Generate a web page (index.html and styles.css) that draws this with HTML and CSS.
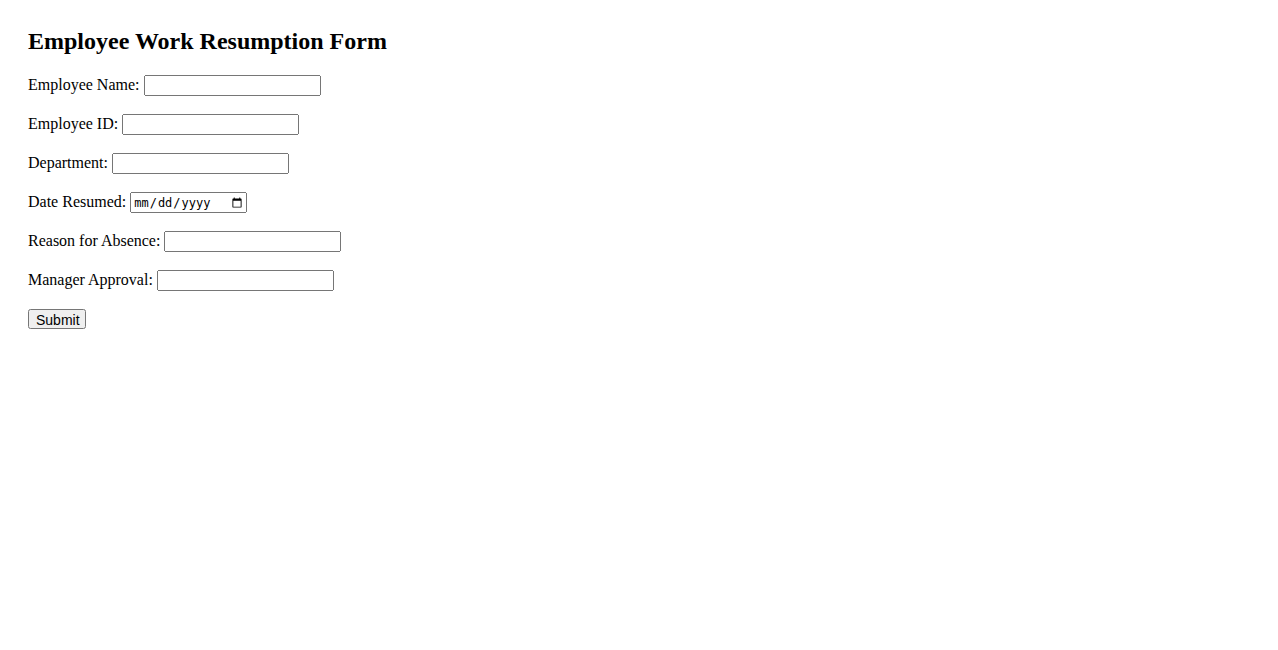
FILE: index.html
```html
<!DOCTYPE html>
<html>
<head>
<meta charset="utf-8">
<title>Employee Work Resumption Form</title>
<link rel="stylesheet" href="styles.css">
</head>
<body class="page">
<h2 class="title">Employee Work Resumption Form</h2>
<form class="form">
<p class="row"><label for="name">Employee Name:</label> <input class="field" type="text" id="name"></p>
<p class="row"><label for="eid">Employee ID:</label> <input class="field" type="text" id="eid"></p>
<p class="row"><label for="dept">Department:</label> <input class="field" type="text" id="dept"></p>
<p class="row"><label for="date">Date Resumed:</label> <input class="date" type="date" id="date"></p>
<p class="row"><label for="reason">Reason for Absence:</label> <input class="field" type="text" id="reason"></p>
<p class="row"><label for="mgr">Manager Approval:</label> <input class="field" type="text" id="mgr"></p>
<p class="row"><input class="submit" type="submit" value="Submit"></p>
</form>
</body>
</html>
```
FILE: styles.css
```css
.page {
  margin: 8px;
  padding: 20px;
  font-family: "Liberation Serif", "Times New Roman", serif;
  font-size: 16px;
  color: #000;
  background: #fff;
}
.title {
  margin: 0 0 20px;
  font-size: 24px;
  font-weight: bold;
}
.row {
  margin: 18px 0;
}
.field {
  box-sizing: border-box;
  width: 177px;
  height: 21px;
  font-family: "Liberation Sans", Arial, sans-serif;
}
.date {
  box-sizing: border-box;
  width: 117px;
  height: 21px;
  font-size: 12px;
}
.submit {
  box-sizing: border-box;
  width: 58px;
  height: 20px;
  font-family: "Liberation Sans", Arial, sans-serif;
  font-size: 14px;
}
```
